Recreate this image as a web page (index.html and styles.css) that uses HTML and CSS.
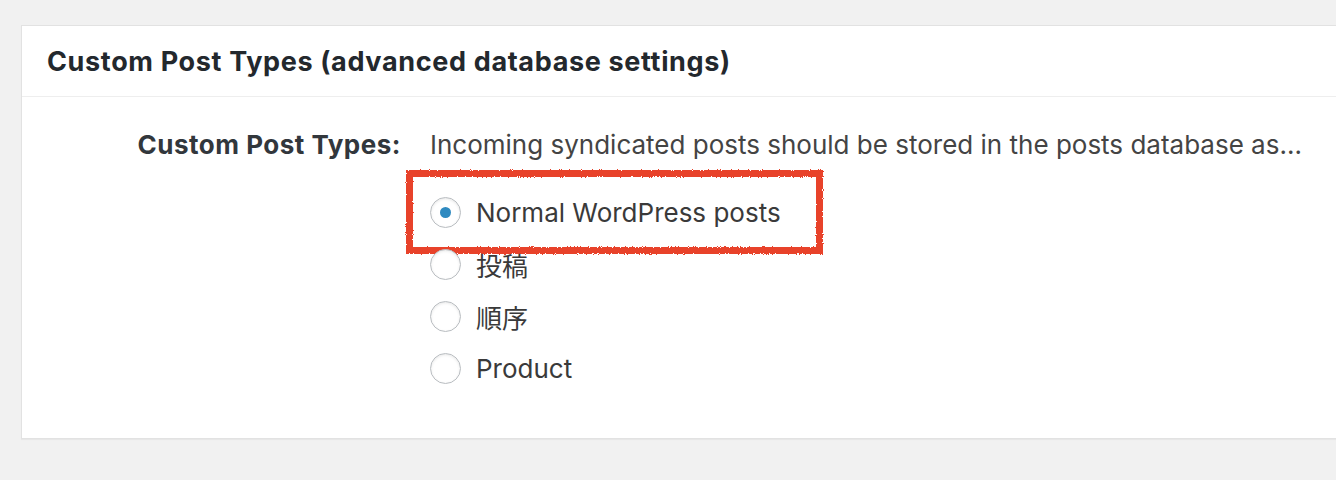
FILE: index.html
```html
<!DOCTYPE html>
<html>
<head>
<meta charset="utf-8">
<link rel="stylesheet" href="styles.css">
</head>
<body>
<svg class="defs" width="0" height="0" aria-hidden="true">
  <filter id="rough" x="-5%" y="-5%" width="110%" height="110%">
    <feTurbulence type="fractalNoise" baseFrequency="0.9" numOctaves="2" seed="3" result="noise"/>
    <feDisplacementMap in="SourceGraphic" in2="noise" scale="3"/>
  </filter>
</svg>
<div class="card">
  <div class="card-head"><h2 class="card-title">Custom Post Types (advanced database settings)</h2></div>
  <div class="card-body">
    <div class="field-label">Custom Post Types:</div>
    <div class="field">
      <p class="desc">Incoming syndicated posts should be stored in the posts database as...</p>
      <ul class="options">
        <li class="option"><span class="radio checked"></span><span>Normal WordPress posts</span><span class="mark"></span></li>
        <li class="option"><span class="radio"></span><span class="cjk">投稿</span></li>
        <li class="option"><span class="radio"></span><span class="cjk">順序</span></li>
        <li class="option"><span class="radio"></span><span>Product</span></li>
      </ul>
    </div>
  </div>
</div>
</body>
</html>
```
FILE: styles.css
```css
html, body { margin: 0; padding: 0; }
body {
  background: #f1f1f1;
  font-family: "Inter", "Noto Sans CJK JP", sans-serif;
  color: #444;
  height: 480px;
  overflow: hidden;
}
.defs { position: absolute; }
.card {
  margin: 25px 0 0 21px;
  width: 1340px;
  background: #fff;
  border: 1px solid #e2e2e2;
  box-shadow: 0 1px 1px rgba(0,0,0,0.04);
}
.card-head {
  height: 70px;
  border-bottom: 1px solid #eeeeee;
  display: flex;
  align-items: center;
  padding-left: 25px;
}
.card-title {
  margin: 0;
  font-size: 27px;
  font-weight: 700;
  color: #23282d;
  letter-spacing: 0.65px;
}
.card-body {
  display: grid;
  grid-template-columns: 379px 1fr;
  column-gap: 29px;
  padding: 30px 0 54px 0;
}
.field-label {
  text-align: right;
  font-size: 26px;
  font-weight: 700;
  color: #32373c;
  line-height: 36px;
  letter-spacing: 0.5px;
}
.desc {
  margin: 0;
  font-size: 26px;
  line-height: 36px;
}
.options {
  list-style: none;
  margin: 33px 0 0 0;
  padding: 0;
  display: flex;
  flex-direction: column;
  gap: 20px;
}
.option {
  position: relative;
  display: flex;
  align-items: center;
  gap: 15px;
  font-size: 26px;
  height: 32px;
  color: #3a3a3a;
}
.cjk { font-family: "Noto Sans CJK JP", sans-serif; }
.radio {
  width: 29px;
  height: 29px;
  border: 1.5px solid #b9bdc1;
  border-radius: 50%;
  background: #fff;
  box-shadow: inset 0 1px 3px rgba(0,0,0,0.1);
  display: flex;
  align-items: center;
  justify-content: center;
  flex: none;
}
.radio.checked::after {
  content: "";
  width: 11px;
  height: 11px;
  border-radius: 50%;
  background: #2f8ac0;
}
.mark {
  position: absolute;
  left: -24px;
  top: -26px;
  width: 417px;
  height: 84px;
  box-sizing: border-box;
  border: 7px solid #e8432a;
  filter: url(#rough);
  pointer-events: none;
}
```
